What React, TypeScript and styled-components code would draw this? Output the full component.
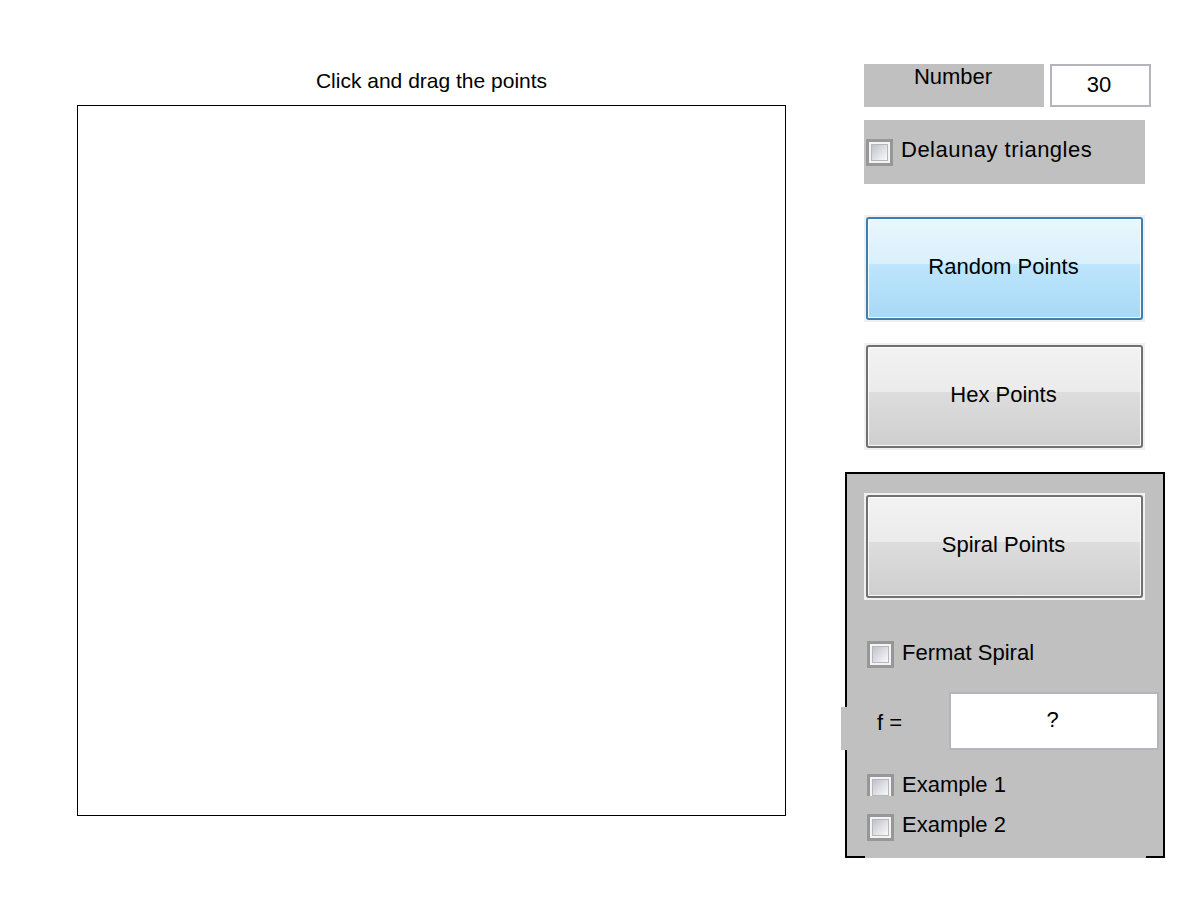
import React from 'react';
import styled, { createGlobalStyle } from "styled-components";

const GlobalStyle=createGlobalStyle`
	body{
		margin:0;
		background:#ffffff;
		font-family:"Liberation Sans", Arial, sans-serif;
		color:#000000;
	}
`;

const Page=styled.div`
	display:flex;
	width:1201px;
	height:901px;
	overflow:hidden;
`;

const PlotColumn=styled.div`
	padding:69px 0 0 77px;
	display:flex;
	flex-direction:column;
`;

const PlotTitle=styled.div`
	font-size:21px;
	line-height:24px;
	text-align:center;
	margin-bottom:12px;
	padding-top:1px;
	margin-top:-1px;
`;

const Axes=styled.div`
	box-sizing:border-box;
	width:709px;
	height:711px;
	border:1px solid #000000;
	background:#ffffff;
`;

const ControlColumn=styled.div`
	margin-left:59px;
	padding-top:64px;
	display:flex;
	flex-direction:column;
	width:320px;
`;

const TopControls=styled.div`
	margin-left:19px;
	display:flex;
	flex-direction:column;
`;

const NumberRow=styled.div`
	display:flex;
	gap:6px;
	height:43px;
`;

const NumberLabel=styled.div`
	width:180px;
	background:#c0c0c0;
	font-size:22px;
	line-height:25px;
	text-align:center;
	padding-right:2px;
	box-sizing:border-box;
`;

const EditBox=styled.div<{$w:number;$h:number}>`
	box-sizing:border-box;
	width:${p=>p.$w}px;
	height:${p=>p.$h}px;
	border:2px solid #b4b4bc;
	background:#ffffff;
	display:flex;
	align-items:center;
	justify-content:center;
	padding:0 3px 2px 0;
	font-size:22px;
`;

const CheckRow=styled.div<{$h:number;$top:number;$front?:boolean}>`
	box-sizing:border-box;
	display:flex;
	align-items:center;
	gap:8px;
	width:281px;
	height:${p=>p.$h}px;
	margin-top:${p=>p.$top}px;
	padding-left:2px;
	background:#c0c0c0;
	font-size:22px;
	${p=>p.$front ? "position:relative;z-index:1;" : ""}
`;

const CheckBox=styled.span`
	box-sizing:border-box;
	display:flex;
	flex-shrink:0;
	width:27px;
	height:27px;
	padding:2px;
	border:3px solid #979797;
	background:#f4f4f4;
	&::after{
		content:"";
		flex:1;
		border:1px solid #b4b7bd;
		background:linear-gradient(135deg,#bfc2ca 0%,#e0e1e5 55%,#fafafa 100%);
	}
`;

const CheckText=styled.span<{$spread?:number}>`
	margin-bottom:4px;
	white-space:nowrap;
	letter-spacing:${p=>p.$spread ?? 0}px;
`;

const ButtonFrame=styled.div<{$top:number}>`
	margin-top:${p=>p.$top}px;
	width:281px;
	padding:2px;
	box-sizing:border-box;
	background:#f0f0f0;
`;

const PushButton=styled.div<{$hover?:boolean}>`
	box-sizing:border-box;
	height:103px;
	display:flex;
	align-items:center;
	justify-content:center;
	border:2px solid ${p=>p.$hover ? "#3c7fb1" : "#707070"};
	border-radius:3px;
	box-shadow:inset 0 0 0 1px rgba(255,255,255,0.85);
	background:${p=>p.$hover
		? "linear-gradient(to bottom,#eaf6fd 0%,#d9f0fc 45%,#bee6fd 45%,#a7d9f5 100%)"
		: "linear-gradient(to bottom,#f2f2f2 0%,#ebebeb 45%,#dddddd 45%,#cfcfcf 100%)"};
	font-size:22px;
	padding:0 2px 3px 0;
`;

const SpiralPanel=styled.div`
	box-sizing:border-box;
	margin-top:22px;
	width:320px;
	height:386px;
	border:2px solid #000000;
	background:#c0c0c0;
	padding:19px 0 0 17px;
	display:flex;
	flex-direction:column;
`;

const PanelRows=styled.div`
	margin-left:1px;
	display:flex;
	flex-direction:column;
`;

const FRow=styled.div`
	display:flex;
	align-items:flex-end;
	margin:12px 0 0 -24px;
	height:58px;
`;

const FLabel=styled.div`
	box-sizing:border-box;
	width:108px;
	height:43px;
	background:#c0c0c0;
	padding:3px 0 0 36px;
	font-size:22px;
	line-height:25px;
`;

const App:React.FC=()=>{
	return(
		<Page>
			<GlobalStyle/>
			<PlotColumn>
				<PlotTitle>Click and drag the points</PlotTitle>
				<Axes/>
			</PlotColumn>
			<ControlColumn>
				<TopControls>
					<NumberRow>
						<NumberLabel>Number</NumberLabel>
						<EditBox $w={101} $h={43}>30</EditBox>
					</NumberRow>
					<CheckRow $h={64} $top={13}>
						<CheckBox/>
						<CheckText $spread={0.5}>Delaunay triangles</CheckText>
					</CheckRow>
					<ButtonFrame $top={31}>
						<PushButton $hover>Random Points</PushButton>
					</ButtonFrame>
					<ButtonFrame $top={21}>
						<PushButton>Hex Points</PushButton>
					</ButtonFrame>
				</TopControls>
				<SpiralPanel>
					<ButtonFrame $top={0}>
						<PushButton>Spiral Points</PushButton>
					</ButtonFrame>
					<PanelRows>
						<CheckRow $h={51} $top={29}>
							<CheckBox/>
							<CheckText>Fermat Spiral</CheckText>
						</CheckRow>
						<FRow>
							<FLabel>f =</FLabel>
							<EditBox $w={210} $h={58}>?</EditBox>
						</FRow>
						<CheckRow $h={62} $top={6}>
							<CheckBox/>
							<CheckText>Example 1</CheckText>
						</CheckRow>
						<CheckRow $h={62} $top={-22} $front>
							<CheckBox/>
							<CheckText>Example 2</CheckText>
						</CheckRow>
					</PanelRows>
				</SpiralPanel>
			</ControlColumn>
		</Page>
	);
}

export default App;
